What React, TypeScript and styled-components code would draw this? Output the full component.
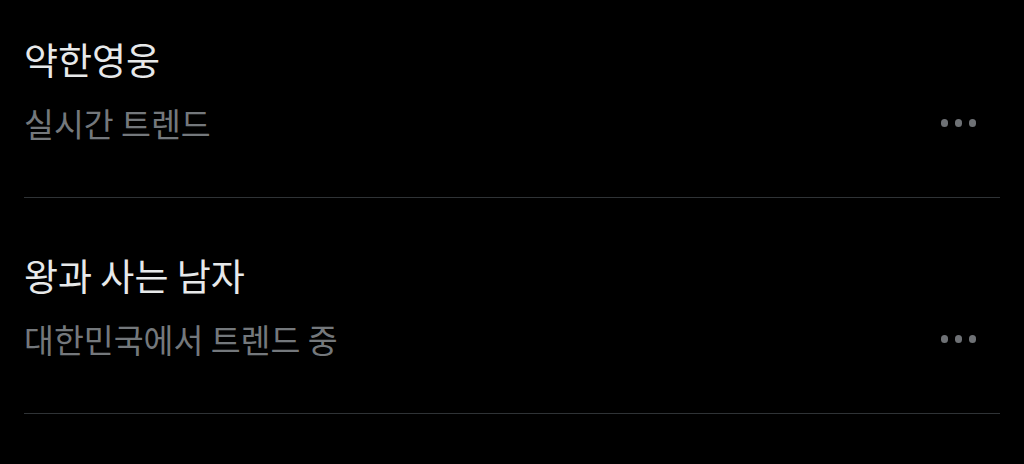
import React from "react";
import styled, { createGlobalStyle } from "styled-components";

const Global = createGlobalStyle`
  html, body { margin: 0; padding: 0; background: #000; }
  body { font-family: "Noto Sans CJK KR", "Noto Sans", sans-serif; }
`;

const Page = styled.div`
  width: 1024px;
  height: 464px;
  background: #000;
  padding: 0 24px;
  box-sizing: border-box;
  overflow: hidden;
`;

const Item = styled.div<{ $lead?: boolean }>`
  display: grid;
  grid-template-columns: 1fr auto;
  grid-template-rows: auto auto;
  align-content: start;
  padding-top: ${(p) => (p.$lead ? "37px" : "55px")};
  height: ${(p) => (p.$lead ? "198px" : "216px")};
  box-sizing: border-box;
  border-bottom: 1.5px solid #2f3336;
`;

const Title = styled.div`
  grid-column: 1;
  font-size: 37px;
  line-height: 44px;
  font-weight: 400;
  color: #e7e9ea;
`;

const Subtitle = styled.div`
  grid-column: 1;
  font-size: 32.5px;
  line-height: 40px;
  margin-top: 22px;
  color: #74787c;
`;

const More = styled.div`
  grid-column: 2;
  grid-row: 2;
  align-self: center;
  display: flex;
  gap: 6.5px;
  margin-top: 22px;
  padding-right: 24px;
`;

const Dot = styled.span`
  width: 7.5px;
  height: 7.5px;
  border-radius: 50%;
  background: #6e7175;
`;

const trends = [
  { title: "약한영웅", sub: "실시간 트렌드" },
  { title: "왕과 사는 남자", sub: "대한민국에서 트렌드 중" },
];

export default function App() {
  return (
    <>
      <Global />
      <Page>
        {trends.map((t, i) => (
          <Item key={t.title} $lead={i === 0}>
            <Title>{t.title}</Title>
            <Subtitle>{t.sub}</Subtitle>
            <More>
              <Dot />
              <Dot />
              <Dot />
            </More>
          </Item>
        ))}
      </Page>
    </>
  );
}
